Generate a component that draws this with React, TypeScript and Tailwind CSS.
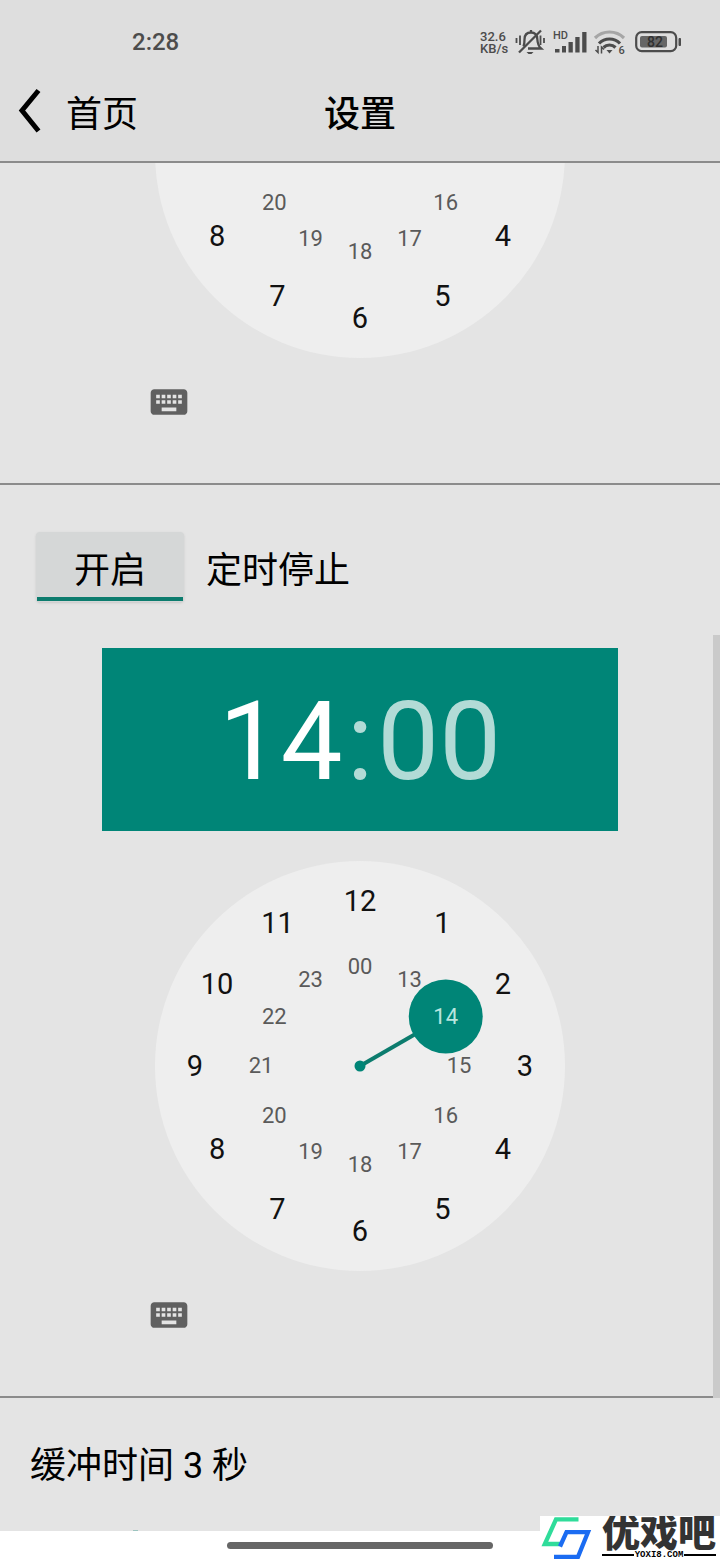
import React, { useState } from 'react';
import { MdKeyboard } from 'react-icons/md';

const OUTER_HOURS = [12, 1, 2, 3, 4, 5, 6, 7, 8, 9, 10, 11];
const INNER_HOURS = ['00', '13', '14', '15', '16', '17', '18', '19', '20', '21', '22', '23'];

const polar = (index: number, radius: number) => {
  const angle = (index * Math.PI) / 6;
  return {
    x: 205 + Math.sin(angle) * radius,
    y: 205 - Math.cos(angle) * radius,
  };
};

interface ClockFaceProps {
  selected?: number;
  // hide the hours above this line, for a dial that is scrolled half out of view
  hiddenAbove?: number;
}

const ClockFace: React.FC<ClockFaceProps> = ({ selected, hiddenAbove = 0 }) => {
  const hand = selected === undefined ? null : polar(selected, 99);
  return (
    <svg viewBox="0 0 410 410" className="w-[410px] shrink-0" role="img" aria-label="时钟">
      <circle cx="205" cy="205" r="205" fill="#eeeeee" />
      {OUTER_HOURS.map((hour, i) => {
        const p = polar(i, 165);
        if (p.y + 11 < hiddenAbove) return null;
        return (
          <text key={hour} x={p.x} y={p.y + 10} textAnchor="middle" className="fill-[#111111] text-[29px]">
            {hour}
          </text>
        );
      })}
      {hand && (
        <>
          <line x1="205" y1="205" x2={hand.x} y2={hand.y} stroke="#0c7c6e" strokeWidth="4" />
          <circle cx="205" cy="205" r="5.5" fill="#008577" />
          <circle cx={hand.x} cy={hand.y} r="37" fill="#008577" />
        </>
      )}
      {INNER_HOURS.map((hour, i) => {
        const p = polar(i, 99);
        if (p.y + 8 < hiddenAbove) return null;
        return (
          <text
            key={hour}
            x={p.x}
            y={p.y + 7}
            textAnchor="middle"
            className={i === selected ? 'fill-[#b9e6df] text-[22px]' : 'fill-[#5a5a5a] text-[22px]'}
          >
            {hour}
          </text>
        );
      })}
    </svg>
  );
};

const KeyboardButton: React.FC = () => (
  <div className="w-[426px] shrink-0 mt-[22px] mb-[59px]">
    <button type="button" aria-label="键盘输入" className="block text-[#606060]">
      <MdKeyboard className="w-11 h-11" />
    </button>
  </div>
);

const StatusBar: React.FC = () => (
  <div className="h-[66px] pt-[18px] pl-[132px] pr-[37px] flex items-center justify-between text-[#4c4c4c]">
    <span className="text-2xl font-medium">2:28</span>
    <div className="flex items-center">
      <div className="text-[13px] leading-3 font-medium w-[35px] pt-0.5">
        <div>32.6</div>
        <div>KB/s</div>
      </div>
      <svg viewBox="0 0 30 28" className="w-[30px] h-7" fill="none" stroke="currentColor" strokeWidth="2.300">
        <path d="M1.500 10v5M5 7.500v9.500M25.500 7.500V17M29 10v5" strokeWidth="1.800" />
        <path d="M8.500 18.500c1-2 1-4 1-7C9.500 7 12 4.500 16 4.500s6 2.500 6.300 6.500c.3 4.500.7 7 3.700 9.500H13M16 2v2.500" />
        <path d="M4 24.500L26 2.500" />
        <path d="M11.500 24h7l-2 2h-3z" fill="currentColor" stroke="none" />
      </svg>
      <svg viewBox="0 0 36 28" className="w-9 h-7 ml-2" fill="currentColor">
        <text x="0" y="11" className="text-[11px] font-medium">HD</text>
        <path d="M2 21h4.500v3.500H2zM9 18h4v6.500H9zM15.500 14h4.300v10.500h-4.300zM22.300 9h4.300v15.500h-4.300zM29.200 4h4.300v20.500h-4.300z" />
      </svg>
      <svg viewBox="0 0 34 28" className="w-[34px] h-7 ml-1" fill="none" stroke="currentColor" strokeWidth="3.200">
        <path d="M2 10a20.500 20.500 0 0 1 29 0" stroke="#a6a6a6" />
        <path d="M6 15.500a14.500 14.500 0 0 1 21 0" />
        <path d="M10.500 19.500a8.500 8.500 0 0 1 12 0" />
        <path d="M13.500 22h6l-3 3.500z" fill="currentColor" stroke="none" />
        <path d="M5 18v6.500l-2.500-2.500M8.500 25.500V19l2.500 2.500" strokeWidth="1.500" />
        <text x="25.500" y="26" fill="currentColor" stroke="none" className="text-[11px] font-medium">6</text>
      </svg>
      <svg viewBox="0 0 48 22" className="w-12 h-[22px] ml-2">
        <rect x="1.200" y="1.200" width="40" height="19" rx="5.500" fill="none" stroke="currentColor" strokeWidth="2.200" />
        <rect x="5" y="5" width="27" height="11.500" rx="2" fill="#666666" />
        <path d="M44 7.500h1.500v7H44z" fill="currentColor" stroke="currentColor" />
        <text x="20" y="15.500" textAnchor="middle" fill="#303030" className="text-[14px] font-medium">82</text>
      </svg>
    </div>
  </div>
);

const Header: React.FC = () => (
  <header className="bg-[#dedede] border-b-2 border-[#8b8b8b] relative z-10">
    <StatusBar />
    <div className="h-[95px] pt-0.5 grid grid-cols-[1fr_auto_1fr] items-center text-4xl text-black">
      <a href="#home" className="flex items-center pl-[18px]">
        <svg viewBox="0 0 24 46" className="w-6 h-[46px] -mt-2" fill="none" stroke="currentColor" strokeWidth="5">
          <path d="M20.500 2.500L4 22.500l16.500 20.500" />
        </svg>
        <span className="ml-6">首页</span>
      </a>
      <h1 className="font-medium">设置</h1>
    </div>
  </header>
);

const SiteMark: React.FC = () => (
  <div className="absolute right-0 bottom-0 w-[180px] h-11 bg-white flex overflow-hidden">
    <svg viewBox="0 0 58 44" className="w-[58px] h-11 shrink-0" fill="none" strokeWidth="4.300">
      <path d="M38.500 3.400H16L4.800 28H21" stroke="#2fdc9a" />
      <path d="M20 30.500L26.500 16.200H48L38 40.800H14" stroke="#1b6cf2" />
    </svg>
    <div className="flex-1 flex flex-col items-stretch text-[#333333]">
      <span className="text-[38px] leading-[34px] font-black whitespace-nowrap text-center">优戏吧</span>
      <div className="flex items-center gap-px px-1 text-black">
        <span className="flex-1 h-0.5 bg-black" />
        <span className="font-['Liberation_Mono',monospace] font-bold text-[9px] leading-[10px]">YOXI8.COM</span>
        <span className="flex-1 h-0.5 bg-black" />
      </div>
    </div>
  </div>
);

export default function App() {
  const [enabled, setEnabled] = useState(true);

  return (
    <div className="min-h-screen flex flex-col relative bg-[#e4e4e4] text-black font-[Roboto,'Noto_Sans_CJK_SC',sans-serif]">
      <Header />

      <main className="flex-1 flex flex-col relative">
        {/* Start timer, scrolled partly under the header */}
        <section className="h-[322px] overflow-hidden flex flex-col items-center justify-end border-b-2 border-[#8b8b8b]">
          <ClockFace hiddenAbove={215} />
          <KeyboardButton />
        </section>

        {/* Stop timer */}
        <section className="flex flex-col items-center border-b-2 border-[#8b8b8b] pt-[47px]">
          <div className="self-stretch flex items-center pl-9 text-4xl">
            <button
              type="button"
              aria-pressed={enabled}
              onClick={() => setEnabled(!enabled)}
              className="w-[148px] h-[70px] flex flex-col rounded bg-[#d5d7d7] shadow-sm"
            >
              <span className="flex-1 flex items-center justify-center self-stretch pt-3">开启</span>
              <span className={enabled ? 'h-1 mx-px mb-px self-stretch bg-[#0c7c6e]' : 'h-1 mx-px mb-px self-stretch bg-[#b4b4b4]'} />
            </button>
            <h2 className="ml-[22px] pt-2">定时停止</h2>
          </div>

          <div className="mt-[46px] w-[516px] h-[183px] pt-1 bg-[#008577] flex items-center justify-center text-[110px] leading-none text-[#b2dbd6]">
            <button type="button" className="text-white">14</button>
            <span className="mx-1">:</span>
            <button type="button">00</button>
          </div>

          <div className="mt-[30px] flex">
            <ClockFace selected={2} />
          </div>
          <KeyboardButton />
        </section>

        <section className="flex-1 flex items-center pl-[30px] pt-0.5 text-4xl">
          <p>缓冲时间 3 秒</p>
        </section>

        <div className="absolute right-0 bottom-[133px] w-[7px] h-[763px] bg-[#cacaca]" />
        {/* top edge of the next slider's thumb */}
        <div className="absolute left-[133px] bottom-0 w-[5px] h-px bg-[#9cc4bf]" />
      </main>

      <footer className="h-[29px] bg-white flex items-center justify-center">
        <div className="w-[266px] h-[7px] rounded-full bg-[#666666]" />
      </footer>
      <SiteMark />
    </div>
  );
}
